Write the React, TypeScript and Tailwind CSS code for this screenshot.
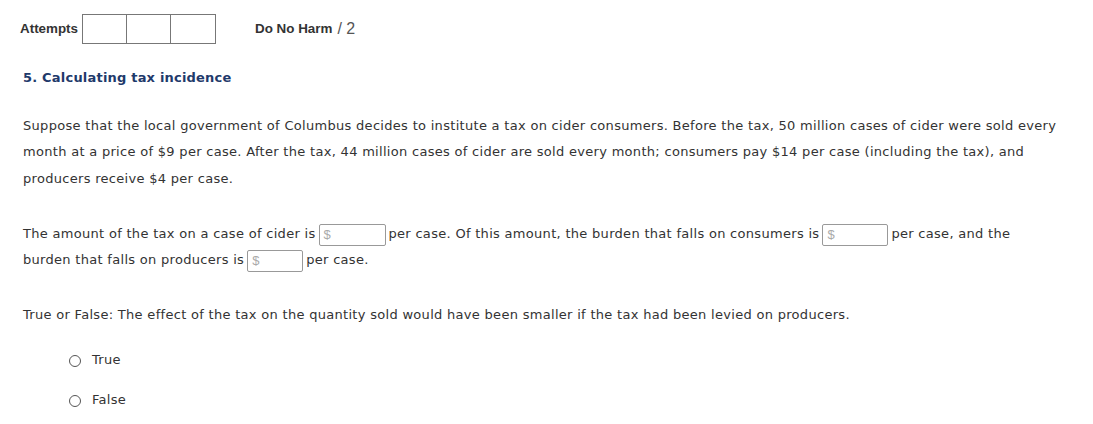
export default function App() {
  const body = "font-['DejaVu_Sans',Verdana,sans-serif] text-[13px] tracking-[0.3px] text-[#333]";

  const DollarInput = ({ w }: { w: string }) => (
    <span
      className={`inline-flex items-center ${w} h-[22px] align-middle border border-[#999] rounded-[2px] px-[4px] mx-[3px] text-[13px] tracking-normal text-[#aaa] font-['Liberation_Sans',Arial,sans-serif] bg-white`}
    >
      $
    </span>
  );

  const Radio = ({ label }: { label: string }) => (
    <label className="flex items-center gap-[11px] h-[20px]">
      <span className="w-[12px] h-[12px] rounded-full border border-[#555] bg-white" />
      <span>{label}</span>
    </label>
  );

  return (
    <div className="w-[1093px] h-[424px] bg-white overflow-hidden">
      <div className="flex items-center pt-[14px] pl-[20px] font-['Liberation_Sans',Arial,sans-serif] text-[13.4px] text-[#333]">
        <span className="font-bold mr-[4px]">Attempts</span>
        <div className="flex border border-[#777]">
          <div className="w-[44px] h-[28px] border-r border-[#777]" />
          <div className="w-[44px] h-[28px] border-r border-[#777]" />
          <div className="w-[44px] h-[28px]" />
        </div>
        <span className="font-bold ml-[39px]">Do No Harm</span>
        <span className="ml-[5px] text-[16px] text-[#555]">/ 2</span>
      </div>

      <h2 className="mt-[24px] pl-[23px] font-['DejaVu_Sans',Verdana,sans-serif] text-[13px] tracking-[0.2px] font-bold text-[#1f3a6b]">
        5. Calculating tax incidence
      </h2>

      <div className={`${body} pl-[23px] pr-[34px] leading-[26.5px]`}>
        <p className="mt-[25px]">
          Suppose that the local government of Columbus decides to institute a tax on cider consumers. Before the tax, 50 million cases of cider were sold every month at a price of $9 per case. After the tax, 44 million cases of cider are sold every month; consumers pay $14 per case (including the tax), and producers receive $4 per case.
        </p>

        <p className="mt-[29px] leading-[26px]">
          The amount of the tax on a case of cider is<DollarInput w="w-[67px]" />per case. Of this amount, the burden that falls on consumers is<DollarInput w="w-[66px]" />per case, and the burden that falls on producers is<DollarInput w="w-[56px]" />per case.
        </p>

        <p className="mt-[29px]">
          True or False: The effect of the tax on the quantity sold would have been smaller if the tax had been levied on producers.
        </p>

        <div className="mt-[22px] pl-[46px] flex flex-col gap-[20px]">
          <Radio label="True" />
          <Radio label="False" />
        </div>
      </div>
    </div>
  );
}
